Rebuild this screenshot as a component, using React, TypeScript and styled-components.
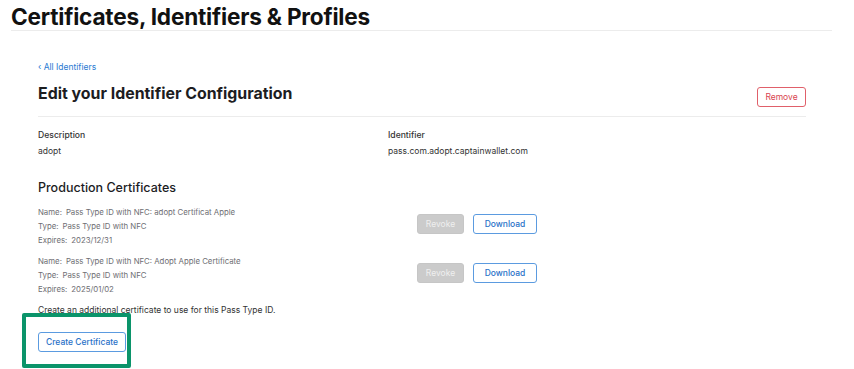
import React from 'react';
import styled, { createGlobalStyle } from 'styled-components';

const GlobalStyle = createGlobalStyle`
  html, body {
    margin: 0;
    padding: 0;
    background: #ffffff;
    font-family: Inter, "Liberation Sans", sans-serif;
    color: #1d1d1f;
  }
`;

interface certI {
  name: string
  type: string
  expires: string
}

const certs: certI[] = [
  { name: 'Pass Type ID with NFC: adopt Certificat Apple', type: 'Pass Type ID with NFC', expires: '2023/12/31' },
  { name: 'Pass Type ID with NFC: Adopt Apple Certificate', type: 'Pass Type ID with NFC', expires: '2025/01/02' },
];

const App = () => {
  return (
    <Page>
      <GlobalStyle />
      <TopHeader>
        <TopTitle>Certificates, Identifiers &amp; Profiles</TopTitle>
      </TopHeader>
      <Content>
        <BackLink>‹ All Identifiers</BackLink>
        <TitleRow>
          <PageTitle>Edit your Identifier Configuration</PageTitle>
          <RemoveBtn>Remove</RemoveBtn>
        </TitleRow>
        <InfoGrid>
          <InfoCol>
            <InfoLabel>Description</InfoLabel>
            <InfoValue>adopt</InfoValue>
          </InfoCol>
          <InfoCol>
            <InfoLabel>Identifier</InfoLabel>
            <InfoValue>pass.com.adopt.captainwallet.com</InfoValue>
          </InfoCol>
        </InfoGrid>
        <SectionTitle>Production Certificates</SectionTitle>
        {certs.map((c) => (
          <CertRow key={c.expires}>
            <CertInfo>
              <CertLine><span>Name:</span>{c.name}</CertLine>
              <CertLine><span>Type:</span>{c.type}</CertLine>
              <CertLine><span>Expires:</span>{c.expires}</CertLine>
            </CertInfo>
            <CertActions>
              <RevokeBtn>Revoke</RevokeBtn>
              <OutlineBtn>Download</OutlineBtn>
            </CertActions>
          </CertRow>
        ))}
        <Hint>Create an additional certificate to use for this Pass Type ID.</Hint>
        <Highlight>
          <OutlineBtn>Create Certificate</OutlineBtn>
        </Highlight>
      </Content>
    </Page>
  );
};

export default App;

const Page = styled.div`
  width: 854px;
  height: 369px;
  overflow: hidden;
`;

const TopHeader = styled.div`
  margin: 0 22px 0 11px;
  padding-top: 3px;
  border-bottom: 1px solid #ececec;
`;

const TopTitle = styled.h1`
  margin: 0;
  font-size: 22.6px;
  line-height: 27px;
  font-weight: 700;
  letter-spacing: -0.2px;
  color: #111;
`;

const Content = styled.div`
  display: flex;
  flex-direction: column;
  align-items: flex-start;
  width: 768px;
  margin-left: 38px;
  padding-top: 30px;
`;

const BackLink = styled.a`
  font-size: 8.5px;
  line-height: 12px;
  color: #2a7ad2;
  cursor: pointer;
`;

const TitleRow = styled.div`
  width: 100%;
  display: flex;
  justify-content: space-between;
  align-items: flex-end;
  margin-top: 8px;
  padding-bottom: 9px;
  border-bottom: 1px solid #ececec;
`;

const PageTitle = styled.h2`
  margin: 0 0 1px 0;
  font-size: 15.9px;
  line-height: 25px;
  font-weight: 700;
  color: #1d1d1f;
`;

const BaseBtn = styled.div`
  display: inline-flex;
  justify-content: center;
  align-items: center;
  box-sizing: border-box;
  height: 20px;
  border-radius: 3px;
  font-size: 8.5px;
  cursor: pointer;
`;

const RemoveBtn = styled(BaseBtn)`
  width: 49px;
  border: 1px solid #e0606a;
  color: #d9434f;
  background: #fff;
`;

const InfoGrid = styled.div`
  width: 100%;
  display: grid;
  grid-template-columns: 350px 1fr;
  margin-top: 12px;
`;

const InfoCol = styled.div`
  display: flex;
  flex-direction: column;
  gap: 4px;
`;

const InfoLabel = styled.div`
  font-size: 8.6px;
  line-height: 12px;
  font-weight: 500;
  color: #333;
`;

const InfoValue = styled.div`
  font-size: 8.5px;
  line-height: 12px;
  color: #333;
`;

const SectionTitle = styled.h3`
  margin: 23px 0 0 0;
  font-size: 12.5px;
  line-height: 16px;
  font-weight: 500;
  color: #1d1d1f;
`;

const CertRow = styled.div`
  width: 100%;
  display: grid;
  grid-template-columns: 379px 1fr;
  align-items: center;
  margin-top: 9px;
  & + & {
    margin-top: 7px;
  }
`;

const CertInfo = styled.div`
  display: flex;
  flex-direction: column;
`;

const CertLine = styled.div`
  font-size: 7.8px;
  line-height: 14px;
  color: #6e6e73;
  span {
    margin-right: 4px;
  }
`;

const CertActions = styled.div`
  display: flex;
  gap: 9px;
  align-items: center;
  margin-top: -5px;
`;

const RevokeBtn = styled(BaseBtn)`
  width: 47px;
  background: #cbcbcb;
  border: 1px solid #c6c6c6;
  color: #efefef;
`;

const OutlineBtn = styled(BaseBtn)`
  padding: 0 7px;
  min-width: 64px;
  border: 1px solid #5b9be0;
  color: #2a72c8;
  background: #fff;
  font-weight: 500;
`;

const Hint = styled.div`
  margin-top: 8px;
  font-size: 8.5px;
  line-height: 12px;
  color: #333;
`;

const Highlight = styled.div`
  margin: -3px 0 0 -16px;
  padding: 12px 1px 12px 12px;
  border: 4px solid #0b946a;
  border-radius: 2px;
`;
